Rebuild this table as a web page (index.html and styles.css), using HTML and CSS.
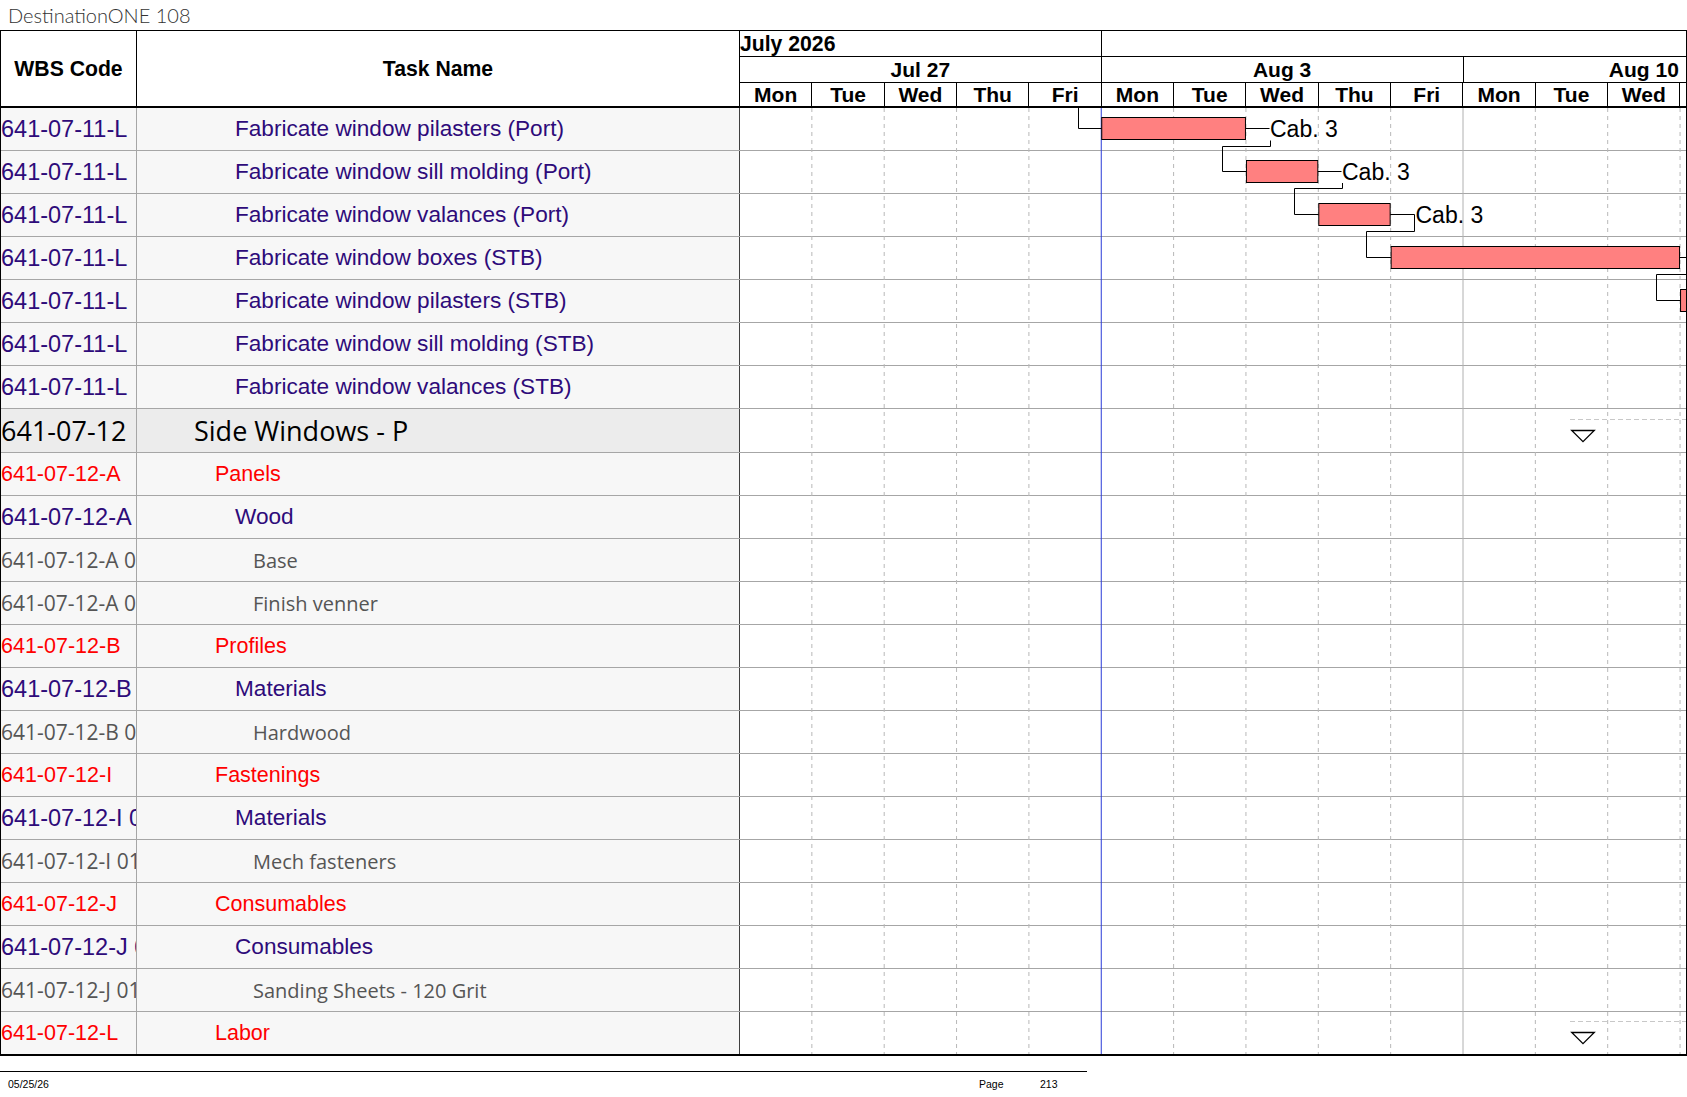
FILE: index.html
```html
<!DOCTYPE html>
<html>
<head>
<meta charset="utf-8">
<link rel="stylesheet" href="styles.css">
</head>
<body>
<div class="title">DestinationONE 108</div>
<div class="sheet">
  <div class="header">
    <div class="h-wbs">WBS Code</div>
    <div class="h-task">Task Name</div>
    <div class="timescale">
      <div class="tier tier1">
        <div class="cell month">July 2026</div>
        <div class="cell month-rest"></div>
      </div>
      <div class="tier tier2">
        <div class="cell week">Jul 27</div>
        <div class="cell week">Aug 3</div>
        <div class="cell week">Aug 10</div>
      </div>
      <div class="tier tier3">
        <div class="cell day">Mon</div>
        <div class="cell day">Tue</div>
        <div class="cell day">Wed</div>
        <div class="cell day">Thu</div>
        <div class="cell day">Fri</div>
        <div class="cell day">Mon</div>
        <div class="cell day">Tue</div>
        <div class="cell day">Wed</div>
        <div class="cell day">Thu</div>
        <div class="cell day">Fri</div>
        <div class="cell day">Mon</div>
        <div class="cell day">Tue</div>
        <div class="cell day">Wed</div>
        <div class="cell day">Thu</div>
      </div>
    </div>
  </div>
  <div class="rows">
    <div class="row l3"><div class="wbs">641-07-11-L</div><div class="task">Fabricate window pilasters (Port)</div><div class="chart"></div></div>
    <div class="row l3"><div class="wbs">641-07-11-L</div><div class="task">Fabricate window sill molding (Port)</div><div class="chart"></div></div>
    <div class="row l3"><div class="wbs">641-07-11-L</div><div class="task">Fabricate window valances (Port)</div><div class="chart"></div></div>
    <div class="row l3"><div class="wbs">641-07-11-L</div><div class="task">Fabricate window boxes (STB)</div><div class="chart"></div></div>
    <div class="row l3"><div class="wbs">641-07-11-L</div><div class="task">Fabricate window pilasters (STB)</div><div class="chart"></div></div>
    <div class="row l3"><div class="wbs">641-07-11-L</div><div class="task">Fabricate window sill molding (STB)</div><div class="chart"></div></div>
    <div class="row l3"><div class="wbs">641-07-11-L</div><div class="task">Fabricate window valances (STB)</div><div class="chart"></div></div>
    <div class="row l1"><div class="wbs">641-07-12</div><div class="task">Side Windows - P</div><div class="chart"></div></div>
    <div class="row l2"><div class="wbs">641-07-12-A</div><div class="task">Panels</div><div class="chart"></div></div>
    <div class="row l3"><div class="wbs">641-07-12-A 01</div><div class="task">Wood</div><div class="chart"></div></div>
    <div class="row l4"><div class="wbs">641-07-12-A 0101</div><div class="task">Base</div><div class="chart"></div></div>
    <div class="row l4"><div class="wbs">641-07-12-A 0102</div><div class="task">Finish venner</div><div class="chart"></div></div>
    <div class="row l2"><div class="wbs">641-07-12-B</div><div class="task">Profiles</div><div class="chart"></div></div>
    <div class="row l3"><div class="wbs">641-07-12-B 01</div><div class="task">Materials</div><div class="chart"></div></div>
    <div class="row l4"><div class="wbs">641-07-12-B 0101</div><div class="task">Hardwood</div><div class="chart"></div></div>
    <div class="row l2"><div class="wbs">641-07-12-I</div><div class="task">Fastenings</div><div class="chart"></div></div>
    <div class="row l3"><div class="wbs">641-07-12-I 01</div><div class="task">Materials</div><div class="chart"></div></div>
    <div class="row l4"><div class="wbs">641-07-12-I 0101</div><div class="task">Mech fasteners</div><div class="chart"></div></div>
    <div class="row l2"><div class="wbs">641-07-12-J</div><div class="task">Consumables</div><div class="chart"></div></div>
    <div class="row l3"><div class="wbs">641-07-12-J 01</div><div class="task">Consumables</div><div class="chart"></div></div>
    <div class="row l4"><div class="wbs">641-07-12-J 0101</div><div class="task">Sanding Sheets - 120 Grit</div><div class="chart"></div></div>
    <div class="row l2 last"><div class="wbs">641-07-12-L</div><div class="task">Labor</div><div class="chart"></div></div>

    <svg class="overlay" width="946" height="946" viewBox="0 0 946 946">
      <g class="grid-dash">
        <line x1="71.85" y1="0" x2="71.85" y2="946"/>
        <line x1="144.2" y1="0" x2="144.2" y2="946"/>
        <line x1="216.55" y1="0" x2="216.55" y2="946"/>
        <line x1="288.9" y1="0" x2="288.9" y2="946"/>
        <line x1="433.6" y1="0" x2="433.6" y2="946"/>
        <line x1="505.95" y1="0" x2="505.95" y2="946"/>
        <line x1="578.3" y1="0" x2="578.3" y2="946"/>
        <line x1="650.65" y1="0" x2="650.65" y2="946"/>
        <line x1="795.35" y1="0" x2="795.35" y2="946"/>
        <line x1="867.7" y1="0" x2="867.7" y2="946"/>
        <line x1="940.05" y1="0" x2="940.05" y2="946"/>
      </g>
      <line class="grid-week" x1="723" y1="0" x2="723" y2="946"/>
      <line class="today" x1="361.25" y1="0" x2="361.25" y2="946"/>

      <g class="links">
        <path d="M338.5 0 V20.5 H361.75"/>
        <path d="M505.45 20.5 H529.5"/>
        <path d="M530.5 32.5 V38.5 H482.5 V63.5 H506.45"/>
        <path d="M577.8 63.5 H601.5"/>
        <path d="M602.5 75 V80.5 H554.5 V106.5 H578.8"/>
        <path d="M650.15 106.5 H674.5 V123.5 H626.5 V149.5 H651.15"/>
        <path d="M939.55 149.5 H946"/>
        <path d="M946 166.5 H916.5 V192.5 H940.55"/>
      </g>

      <g class="bars">
        <rect x="361.75" y="9.5" width="143.7" height="22"/>
        <rect x="506.45" y="52.5" width="71.35" height="22"/>
        <rect x="578.8" y="95.5" width="71.35" height="22"/>
        <rect x="651.15" y="138.5" width="288.4" height="22"/>
        <rect x="940.55" y="181.5" width="71.35" height="22"/>
      </g>

      <g class="labels">
        <text x="530" y="28.8">Cab. 3</text>
        <text x="602" y="71.8">Cab. 3</text>
        <text x="675.5" y="114.8">Cab. 3</text>
      </g>

      <g class="summary">
        <line class="sum-dash" x1="830" y1="311.5" x2="946" y2="311.5"/>
        <polygon points="831.7,322.5 854.3,322.5 843,333.7"/>
        <line class="sum-dash" x1="830" y1="913.5" x2="946" y2="913.5"/>
        <polygon points="831.7,924.5 854.3,924.5 843,935.7"/>
      </g>
    </svg>
  </div>
</div>
<div class="footer">
  <div class="f-date">05/25/26</div>
  <div class="f-page">Page</div>
  <div class="f-num">213</div>
</div>
</body>
</html>
```

FILE: styles.css
```css
* {
  box-sizing: border-box;
}

body {
  margin: 0;
  width: 1687px;
  background: #ffffff;
  color: #000000;
  font-family: "Liberation Sans", Arial, sans-serif;
}

.title {
  height: 30px;
  padding-left: 8px;
  font-family: Lato, "DejaVu Sans", sans-serif;
  font-weight: 300;
  font-size: 20px;
  line-height: 30px;
  color: #333333;
  white-space: nowrap;
}

.sheet {
  width: 1687px;
  border-top: 1px solid #000;
  border-left: 1px solid #000;
  border-right: 1px solid #000;
  border-bottom: 2px solid #000;
}

/* ---------- header ---------- */
.header {
  display: flex;
  height: 77px;
  border-bottom: 2px solid #000;
}

.h-wbs,
.h-task {
  display: flex;
  align-items: center;
  justify-content: center;
  font-weight: bold;
  font-size: 21.2px;
  border-right: 1px solid #000;
  flex: none;
}

.h-wbs {
  width: 136px;
}

.h-task {
  width: 603px;
}

.timescale {
  width: 946px;
  flex: none;
  overflow: hidden;
  display: flex;
  flex-direction: column;
}

.tier {
  display: flex;
  flex: none;
}

.tier1 {
  height: 26px;
  border-bottom: 1px solid #000;
}

.tier2 {
  height: 26px;
  border-bottom: 1px solid #000;
}

.tier3 {
  height: 23px;
}

.cell {
  flex: none;
  display: flex;
  align-items: center;
  justify-content: center;
  border-right: 1px solid #000;
  font-weight: bold;
  font-size: 21px;
  white-space: nowrap;
  overflow: hidden;
}

.month {
  width: 361.75px;
  justify-content: flex-start;
  font-size: 21.2px;
}

.month-rest {
  width: 723.5px;
}

.week {
  width: 361.75px;
}

.day {
  width: 72.35px;
}

/* ---------- rows ---------- */
.rows {
  position: relative;
}

.row {
  display: flex;
  height: 43px;
  border-bottom: 1px solid #a6a6a6;
}

.row.l1 {
  height: 44px;
}

.row.last {
  height: 42px;
  border-bottom: 0;
}

.wbs,
.task {
  flex: none;
  display: flex;
  align-items: center;
  white-space: nowrap;
  overflow: hidden;
  background: #f7f7f7;
}

.wbs {
  width: 136px;
  border-right: 1px solid #a6a6a6;
}

.task {
  width: 603px;
  border-right: 1px solid #404040;
}

.chart {
  flex: none;
  width: 946px;
  background: #ffffff;
}

.l1 .wbs,
.l1 .task {
  font-family: "Open Sans", "Noto Sans", sans-serif;
  font-size: 27px;
  color: #000000;
  background: #ececec;
}

.l1 .task {
  padding-left: 57px;
}

.l2 .wbs,
.l2 .task {
  font-size: 21.5px;
  color: #ff0000;
}

.l2 .task {
  padding-left: 78px;
}

.l3 .wbs {
  font-size: 23.5px;
  color: #2e0b7a;
}

.l3 .task {
  font-size: 22.6px;
  color: #2e0b7a;
  padding-left: 98px;
}

.l4 .wbs,
.l4 .task {
  font-family: "Open Sans", "Noto Sans", sans-serif;
  color: #555555;
}

.l4 .wbs {
  font-size: 21px;
}

.l4 .task {
  font-size: 20px;
  padding-left: 116px;
}

/* ---------- gantt overlay ---------- */
.overlay {
  position: absolute;
  left: 739px;
  top: 0;
  overflow: hidden;
  pointer-events: none;
}

.grid-dash line {
  stroke: #b8b8b8;
  stroke-width: 1;
  stroke-dasharray: 4 4;
}

.grid-week {
  stroke: #b0b0b0;
  stroke-width: 1;
}

.today {
  stroke: #2a3bd8;
  stroke-width: 1;
}

.links path {
  fill: none;
  stroke: #000;
  stroke-width: 1;
}

.bars rect {
  fill: #ff8080;
  stroke: #000;
  stroke-width: 1;
}

.labels text {
  font-family: "Liberation Sans", Arial, sans-serif;
  font-size: 23px;
  fill: #000;
}

.sum-dash {
  stroke: #c8c8c8;
  stroke-width: 1;
  stroke-dasharray: 5 3;
}

.summary polygon {
  fill: #ffffff;
  stroke: #000;
  stroke-width: 1.3;
}

/* ---------- footer ---------- */
.footer {
  display: flex;
  width: 1087px;
  margin-top: 15px;
  border-top: 1px solid #000;
  padding: 6px 0 0 8px;
  font-size: 10.5px;
  color: #000;
}

.f-date {
  flex: 1;
}

.f-page {
  width: 61px;
}

.f-num {
  width: 47px;
}
```
